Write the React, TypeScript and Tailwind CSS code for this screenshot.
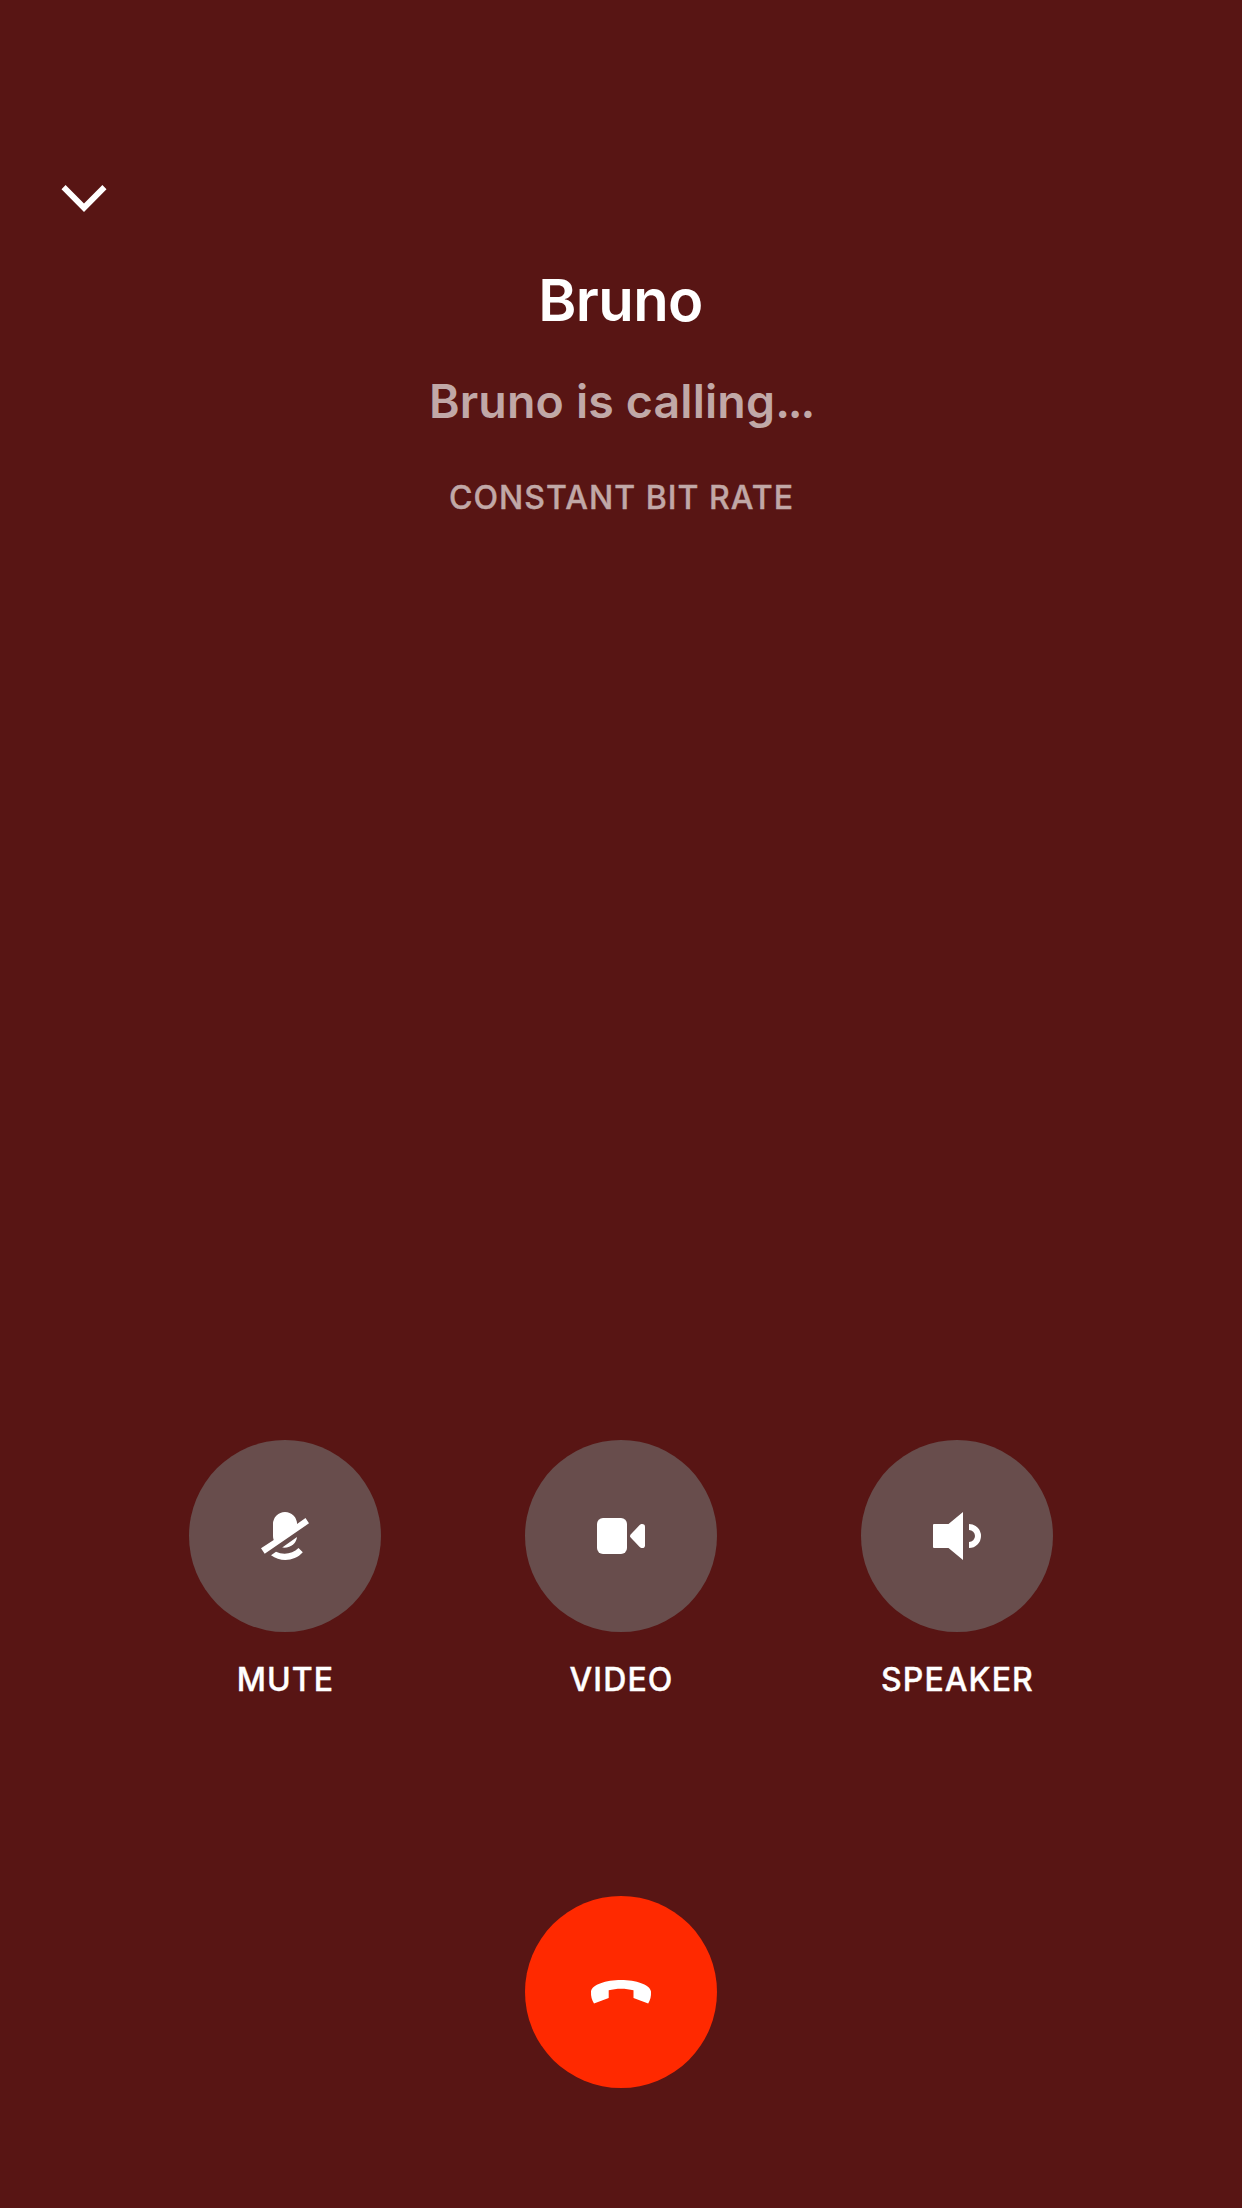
import type { ReactNode } from "react";

function MuteIcon() {
  return (
    <svg width="70" height="70" viewBox="0 0 70 70" fill="#fff">
      <path d="M23 24a12 12 0 0 1 24 0L47 24L55.5 18L59 23.3L14.7 53.7L11 48.2L23.7 40C23.2 38.5 23 37.5 23 36Z" />
      <path d="M47 37C46.5 43.2 40.5 48.6 32.2 47.6Z" />
      <path d="M26 51.7C33 55.2 42.5 54.2 48.5 48L52.8 52.3C44.5 61.6 30.5 62.3 21 55.3Z" />
    </svg>
  );
}

function VideoIcon() {
  return (
    <svg width="70" height="70" viewBox="0 0 70 70" fill="#fff">
      <rect x="11" y="18" width="30" height="36" rx="6" />
      <path d="M44.9 34.2L53.4 25.3C54.3 24.4 55 24 56.2 24C57.9 24 59 25 59 26.6V45.4C59 47 57.9 48 56.2 48C55 48 54.3 47.6 53.4 46.7L44.9 37.8C43.7 36.5 43.7 35.5 44.9 34.2Z" />
    </svg>
  );
}

function SpeakerIcon() {
  return (
    <svg width="70" height="70" viewBox="0 0 70 70" fill="#fff">
      <path d="M12 24H26.5L41 12V60L26.5 48H12Q11 48 11 47V25Q11 24 12 24Z" />
      <path d="M47 24a12 12 0 0 1 0 24v-6a6 6 0 0 0 0-12Z" />
    </svg>
  );
}

function HangUpIcon() {
  return (
    <svg width="82" height="60" viewBox="0 0 82 60" fill="#fff">
      <path d="M14 43.6L28.7 38V30.3C36 28.2 46 28.2 53.5 30.3V38L68.2 43.6C70.4 39.5 71.2 36.5 71 31.5C70 24.5 56 20 41 20S12 24.5 11 31.5C10.8 36.5 11.8 39.5 14 43.6Z" />
    </svg>
  );
}

function CallAction({ label, children }: { label: string; children: ReactNode }) {
  return (
    <div className="flex w-48 flex-col items-center">
      <button className="flex h-48 w-48 items-center justify-center rounded-full bg-[#684d4c] pb-0.5">
        {children}
      </button>
      <span className="mt-7 pl-px text-[32px] leading-10 font-medium tracking-[1.1px] whitespace-nowrap [-webkit-text-stroke:0.4px_currentColor]">
        {label}
      </span>
    </div>
  );
}

export default function App() {
  return (
    <main className="flex h-[2208px] w-[1242px] flex-col items-center bg-[#581514] font-['Inter',sans-serif] text-white">
      <header className="flex w-full px-[50px] pt-[170px]">
        <button aria-label="Minimize">
          <svg width="70" height="56" viewBox="0 0 70 56" fill="#fff" className="block">
            <path d="M11.5 19.2L15.6 15.1L34 33.5L52.4 15.1L56.5 19.2L34 42Z" />
          </svg>
        </button>
      </header>
      <section className="flex flex-col items-center pt-[34px] text-center">
        <h1 className="pr-px text-[58px] leading-20 font-semibold tracking-[-0.6px]">Bruno</h1>
        <p className="mt-[31px] text-[46.5px] leading-15 font-semibold tracking-[0.15px] text-[#c1a8a7]">
          Bruno is calling<span className="tracking-[-2.2px]">...</span>
        </p>
        <p className="mt-[47px] pl-px text-[32px] leading-10 font-medium tracking-[1.05px] text-[#c1a8a7] [-webkit-text-stroke:0.4px_currentColor]">
          CONSTANT BIT RATE
        </p>
      </section>
      <section className="mt-[922px] flex gap-36">
        <CallAction label="MUTE"><MuteIcon /></CallAction>
        <CallAction label="VIDEO"><VideoIcon /></CallAction>
        <CallAction label="SPEAKER"><SpeakerIcon /></CallAction>
      </section>
      <button
        aria-label="Hang up"
        className="mt-[196px] flex h-48 w-48 shrink-0 items-center justify-center rounded-full bg-[#ff2900] pb-1"
      >
        <HangUpIcon />
      </button>
    </main>
  );
}
